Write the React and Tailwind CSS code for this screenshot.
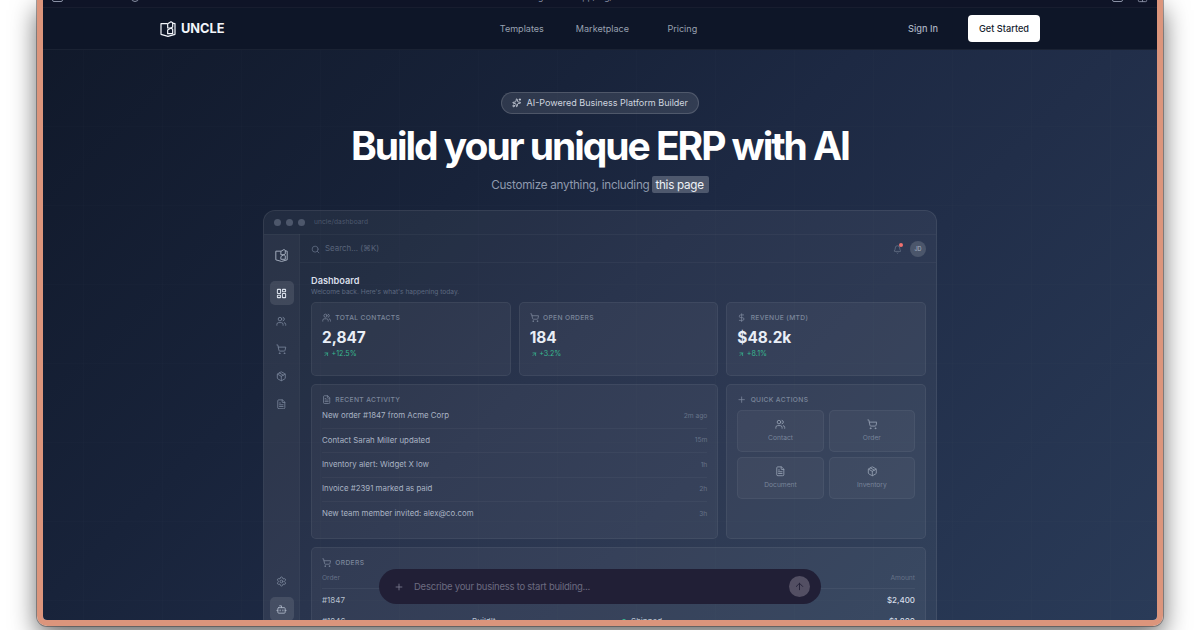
import React from "react";
import {
  Sparkles, Search, LayoutDashboard, Users, ShoppingCart, Package, FileText,
  Settings, Bot, Bell, ArrowUpRight, ArrowUp, Plus, DollarSign, Grid2x2,
} from "lucide-react";

function Logo({ className }) {
  return (
    <svg viewBox="0 0 24 24" fill="none" stroke="currentColor" strokeWidth="1.8" strokeLinejoin="round" strokeLinecap="round" className={className}>
      <path d="M10.500 4H1.500v16L12 23l10.500-3V4l-3-.5" />
      <path d="M11.500 4l5-3 2.500 1.500v6.500l-2.500 1.500h-5z" />
      <path d="M11.500 19h7.500v-6.500l-2.500-2-5 3z" />
    </svg>
  );
}

const sideIcons = [Users, ShoppingCart, Package, FileText];

const stats = [
  { icon: Users, label: "TOTAL CONTACTS", value: "2,847", delta: "+12.5%" },
  { icon: ShoppingCart, label: "OPEN ORDERS", value: "184", delta: "+3.2%" },
  { icon: DollarSign, label: "REVENUE (MTD)", value: "$48.2k", delta: "+8.1%" },
];

const activity = [
  ["New order #1847 from Acme Corp", "2m ago"],
  ["Contact Sarah Miller updated", "15m"],
  ["Inventory alert: Widget X low", "1h"],
  ["Invoice #2391 marked as paid", "2h"],
  ["New team member invited: alex@co.com", "3h"],
];

const actions = [
  [Users, "Contact"],
  [ShoppingCart, "Order"],
  [FileText, "Document"],
  [Package, "Inventory"],
];

const orders = [
  { id: "#1847", amount: "$2,400" },
  { id: "#1846", who: "BuildIt", status: "Shipped", amount: "$1,800" },
];

function CardLabel({ icon: Icon, children }) {
  return (
    <div className="flex h-[10px] items-center gap-1 text-[#7c879b]">
      <Icon className="size-[9.300px]" strokeWidth={2} />
      <span className="mt-px text-[6.700px] font-medium leading-none tracking-[0.340px]">{children}</span>
    </div>
  );
}

function Sidebar() {
  return (
    <aside className="flex w-[36px] shrink-0 flex-col items-center border-r border-white/[0.03] bg-white/[0.035]">
      <Logo className="mt-[15px] size-[13px] text-[#a3adbd]" />
      <div className="mt-[19px] flex size-[24px] items-center justify-center rounded-[5px] bg-white/10 text-[#dbe2ec]">
        <LayoutDashboard className="size-[11px]" strokeWidth={2.200} />
      </div>
      <div className="mt-[11px] flex flex-col items-center gap-[17px] text-[#79859a]">
        {sideIcons.map((Icon, i) => (
          <Icon key={i} className="size-[10.600px]" strokeWidth={1.900} />
        ))}
      </div>
      <Settings className="mt-[167px] size-[11px] shrink-0 text-[#79859a]" strokeWidth={1.900} />
      <div className="mt-[10px] flex size-[24px] shrink-0 items-center justify-center rounded-[5px] bg-white/10 text-[#aab4c4]">
        <Bot className="size-[11px]" strokeWidth={2} />
      </div>
    </aside>
  );
}

function Dashboard() {
  return (
    <section className="mt-[17px] flex h-[460px] w-[674px] shrink-0 flex-col overflow-hidden rounded-t-xl border border-white/[0.08] bg-white/[0.055]">
      <div className="flex h-[24px] shrink-0 items-center border-b border-white/[0.04] pl-[10px]">
        <div className="flex gap-[5px]">
          <i className="size-[7px] rounded-full bg-[#4d576b]" />
          <i className="size-[7px] rounded-full bg-[#4d576b]" />
          <i className="size-[7px] rounded-full bg-[#4d576b]" />
        </div>
        <span className="ml-[9px] text-[6.600px] leading-none tracking-[0.1px] text-[#4d586d]">uncle/dashboard</span>
      </div>
      <div className="-mt-px flex flex-1">
        <Sidebar />
        <div className="flex flex-1 flex-col">
          <header className="flex h-[29px] shrink-0 items-center border-b border-white/[0.04] pl-[11px] pr-[10px] pt-[2px]">
            <Search className="size-[9px] text-[#667188]" strokeWidth={2} />
            <span className="ml-[5px] text-[7.900px] leading-none text-[#59647a]">Search... (⌘K)</span>
            <div className="relative ml-auto mr-[8px]">
              <Bell className="size-[9px] text-[#6f7a8f]" strokeWidth={1.800} />
              <i className="absolute -right-[1px] -top-[2px] size-1 rounded-full bg-[#f0716f]" />
            </div>
            <span className="flex size-[16px] items-center justify-center rounded-full bg-[#4b566b] text-[5.500px] font-medium text-[#a0aabc]">JD</span>
          </header>
          <main className="pl-[11px] pr-[10px] pt-[12px]">
            <h2 className="text-[9.200px] font-semibold leading-[11px] text-[#d9dfe9]">Dashboard</h2>
            <p className="mt-[2px] text-[6.600px] leading-[8px] text-[#5d6980]">Welcome back. Here's what's happening today.</p>
            <div className="mt-[6px] grid grid-cols-3 gap-[8px]">
              {stats.map((s) => (
                <div key={s.label} className="h-[74px] rounded-[5px] border border-white/[0.06] bg-white/[0.045] px-[10px] pt-[10px]">
                  <CardLabel icon={s.icon}>{s.label}</CardLabel>
                  <div className="mt-[5px] text-[15.400px] font-bold leading-[19px] text-[#e9eef6]">{s.value}</div>
                  <div className="mt-[3px] flex h-[8px] items-center gap-[2px] pl-[1px] text-[7.100px] leading-none text-[#38b990]">
                    <ArrowUpRight className="size-[6.500px]" strokeWidth={2.600} />
                    {s.delta}
                  </div>
                </div>
              ))}
              <div className="col-span-2 h-[155px] rounded-[5px] border border-white/[0.06] bg-white/[0.045] px-[10px] pt-[10px]">
                <CardLabel icon={FileText}>RECENT ACTIVITY</CardLabel>
                <ul className="-mt-[0.500px] divide-y divide-white/[0.04]">
                  {activity.map(([t, when]) => (
                    <li key={t} className="flex h-[24.400px] items-center justify-between">
                      <span className="text-[7.850px] leading-none text-[#a9b3c3]">{t}</span>
                      <span className="text-[6.700px] leading-none text-[#667288]">{when}</span>
                    </li>
                  ))}
                </ul>
              </div>
              <div className="h-[155px] rounded-[5px] border border-white/[0.06] bg-white/[0.045] px-[10px] pt-[10px]">
                <CardLabel icon={Plus}>QUICK ACTIONS</CardLabel>
                <div className="mt-[5px] grid grid-cols-2 gap-[5px]">
                  {actions.map(([Icon, label]) => (
                    <div key={label} className="flex h-[42px] flex-col items-center rounded-[5px] border border-white/[0.05] bg-white/[0.035] pt-[8px]">
                      <Icon className="size-[10.600px] text-[#929db0]" strokeWidth={2} />
                      <span className="mt-[5.500px] text-[6.700px] leading-none text-[#78849a]">{label}</span>
                    </div>
                  ))}
                </div>
              </div>
              <div className="col-span-3 h-[110px] rounded-[5px] border border-white/[0.06] bg-white/[0.045] px-[10px] pt-[10px]">
                <CardLabel icon={ShoppingCart}>ORDERS</CardLabel>
                <div className="flex h-[21px] items-center justify-between border-b border-white/[0.05] pt-px text-[6.700px] leading-none text-[#667288]">
                  <span>Order</span>
                  <span>Amount</span>
                </div>
                {orders.map((o) => (
                  <div key={o.id} className="grid h-[21.500px] grid-cols-[150px_150px_1fr_100px] items-center text-[8px] leading-none text-[#b7c0ce]">
                    <span>{o.id}</span>
                    <span>{o.who}</span>
                    <span className="flex items-center gap-[5px]">
                      {o.status && <i className="size-1 rounded-full bg-[#38b990]" />}
                      {o.status}
                    </span>
                    <span className="text-right font-medium text-[#d5dce7]">{o.amount}</span>
                  </div>
                ))}
              </div>
            </div>
          </main>
        </div>
      </div>
    </section>
  );
}

export default function App() {
  return (
    <div className="flex h-[630px] w-[1200px] justify-center overflow-hidden bg-white font-['Inter','Liberation_Sans',sans-serif]">
      <div className="h-[626px] w-[1126px] overflow-visible rounded-b-[10px] border-x-[6px] border-b-[6px] border-[#dc957c] shadow-[0_0_0_1px_rgba(60,50,50,0.45),0_10px_26px_rgba(0,0,0,0.6)]">
        <div className="relative flex h-[620px] flex-col overflow-hidden rounded-b-[4px] bg-[linear-gradient(135deg,#101829_0%,#18233a_35%,#1d2943_50%,#212e49_65%,#2a3b58_100%)]">
          <div className="flex h-[8px] shrink-0 items-end justify-between border-b border-white/[0.04] bg-[#0f1427] px-[9px] text-[#8a91a5]">
            <div className="flex gap-[68px] self-start">
              <i className="-mt-[9px] size-[11px] rounded-[2px] border border-current" />
              <i className="-mt-[6px] size-[8px] rounded-full border border-current" />
            </div>
            <span className="-mt-[8px] mr-[88px] self-start text-[8.600px] leading-[11px]">begin.uncle.app/org/home</span>
            <div className="flex gap-[14px] self-start">
              <i className="-mt-[9px] size-[11px] rounded-[2px] border border-current" />
              <Grid2x2 className="-mt-[8px] size-[11px]" />
            </div>
          </div>
          <nav className="grid h-[42px] shrink-0 grid-cols-3 items-center border-b border-white/[0.05] bg-[#0e1628] px-[117px]">
            <div className="flex items-center gap-[5px] text-[#f2f5fa]">
              <Logo className="size-[16px]" />
              <span className="mt-[2px] text-[12.800px] font-bold leading-none">UNCLE</span>
            </div>
            <div className="flex justify-center pr-[3px] text-[9.050px] leading-none text-[#98a1b1]">
              <span>Templates</span>
              <span className="ml-[32px]">Marketplace</span>
              <span className="ml-[38.500px]">Pricing</span>
            </div>
            <div className="flex items-center justify-end gap-[30px] text-[9.200px] font-medium leading-none">
              <span className="text-[#a9b1c0]">Sign In</span>
              <span className="flex h-[27px] w-[72px] items-center justify-center rounded-[4px] bg-white text-[#151c2e]">Get Started</span>
            </div>
          </nav>
          <div className="flex flex-1 flex-col items-center bg-[linear-gradient(to_right,rgba(255,255,255,0.008)_1px,transparent_1px),linear-gradient(to_bottom,rgba(255,255,255,0.008)_1px,transparent_1px)] bg-[length:79px_79px] bg-[position:40px_76px]">
            <div className="mt-[42px] flex h-[22px] w-[198px] shrink-0 items-center justify-center gap-[5px] rounded-full border border-white/15 bg-white/10 text-[9.020px] leading-none text-[#ced4df]">
              <Sparkles className="size-[9.500px]" strokeWidth={2.200} />
              AI-Powered Business Platform Builder
            </div>
            <h1 className="mt-[8px] text-[39px] font-bold leading-[48px] tracking-[-2.040px] text-white">Build your unique ERP with AI</h1>
            <p className="mt-[6px] flex h-[17px] items-center gap-[3px] text-[11.700px] leading-[17px] tracking-[-0.280px] text-[#8f9aae]">
              <span className="pt-px">Customize anything, including</span>
              <span className="h-[17px] rounded-[2px] bg-[#4e586d] pl-[3px] pr-[5px] pt-px text-[#eef1f6]">this page</span>
            </p>
            <Dashboard />
          </div>
          <div className="absolute left-[336px] top-[569px] flex h-[35px] w-[442px] items-center rounded-full bg-[#211f36] pl-[15px] pr-[11px]">
            <Plus className="size-[10px] text-[#7c7c90]" strokeWidth={2} />
            <span className="ml-[10px] text-[9.500px] leading-none tracking-[-0.240px] text-[#6c6b80]">Describe your business to start building...</span>
            <span className="ml-auto flex size-[21px] items-center justify-center rounded-full bg-[#534f63] text-[#211f36]">
              <ArrowUp className="size-[11px]" strokeWidth={2} />
            </span>
          </div>
        </div>
      </div>
    </div>
  );
}
